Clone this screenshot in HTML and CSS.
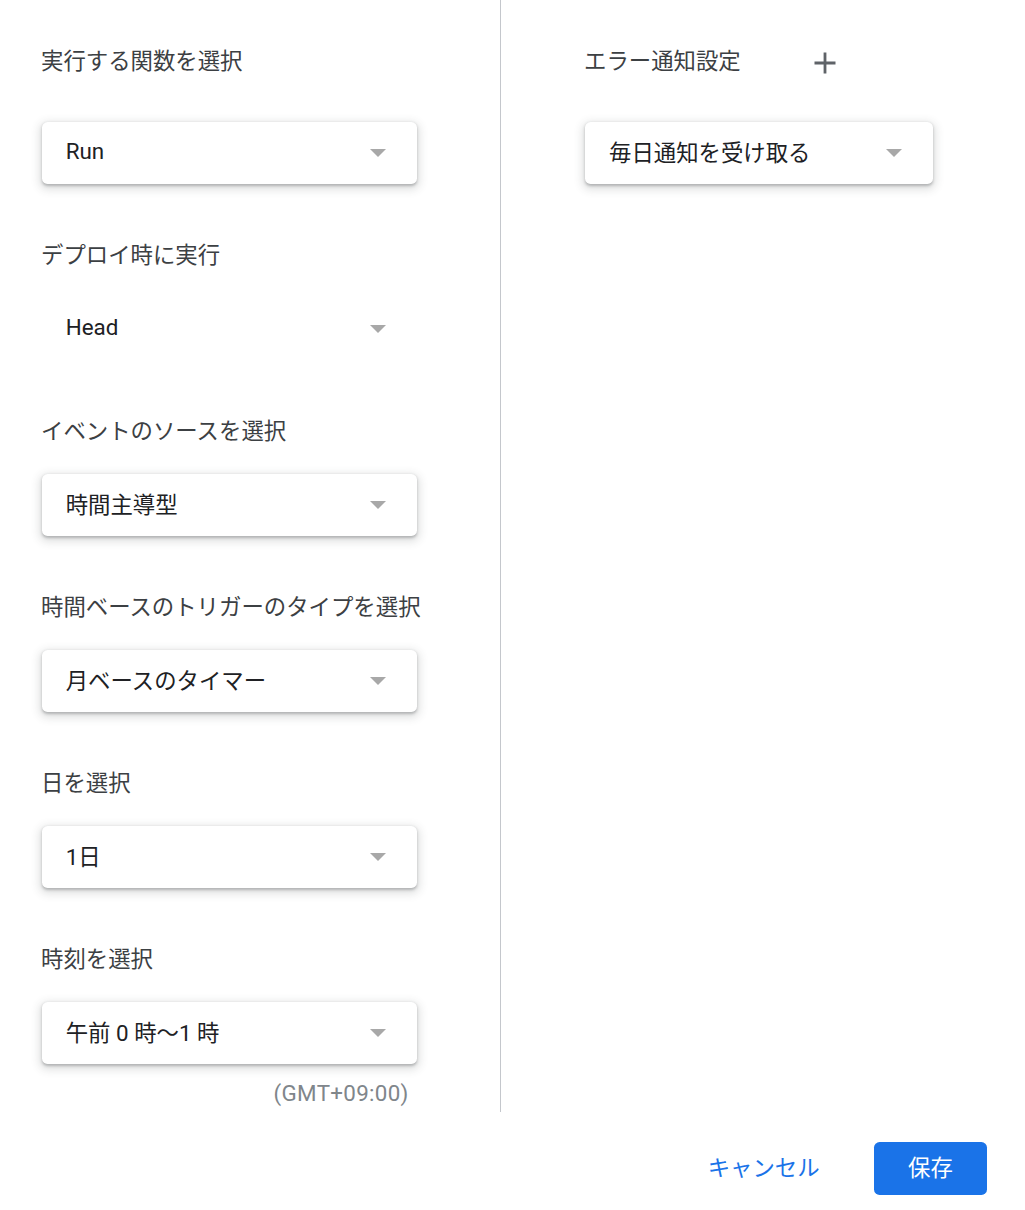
FILE: index.html
```html
<!DOCTYPE html>
<html lang="ja">
<head>
<meta charset="utf-8">
<title>トリガーを追加</title>
<link rel="stylesheet" href="styles.css">
</head>
<body>
<div class="dialog">
  <div class="main">
    <div class="col col-left">
      <div class="field first">
        <div class="label">実行する関数を選択</div>
        <div class="select boxed"><span class="value">Run</span><span class="arrow"></span></div>
      </div>
      <div class="field">
        <div class="label">デプロイ時に実行</div>
        <div class="select"><span class="value">Head</span><span class="arrow"></span></div>
      </div>
      <div class="field">
        <div class="label">イベントのソースを選択</div>
        <div class="select boxed"><span class="value">時間主導型</span><span class="arrow"></span></div>
      </div>
      <div class="field">
        <div class="label">時間ベースのトリガーのタイプを選択</div>
        <div class="select boxed"><span class="value">月ベースのタイマー</span><span class="arrow"></span></div>
      </div>
      <div class="field">
        <div class="label">日を選択</div>
        <div class="select boxed"><span class="value">1日</span><span class="arrow"></span></div>
      </div>
      <div class="field">
        <div class="label">時刻を選択</div>
        <div class="select boxed"><span class="value">午前 0 時〜1 時</span><span class="arrow"></span></div>
        <div class="tz">(GMT+09:00)</div>
      </div>
    </div>
    <div class="col col-right">
      <div class="field first">
        <div class="label label-row">エラー通知設定<span class="plus"><svg width="22" height="22" viewBox="0 0 22 22"><path d="M11 0.5V21.5M0.5 11H21.5" stroke="#5f6368" stroke-width="2.8" fill="none"/></svg></span></div>
        <div class="select boxed narrow"><span class="value">毎日通知を受け取る</span><span class="arrow"></span></div>
      </div>
    </div>
  </div>
  <div class="footer">
    <button class="btn btn-text">キャンセル</button>
    <button class="btn btn-primary">保存</button>
  </div>
</div>
</body>
</html>
```

FILE: styles.css
```css
html, body {
  margin: 0;
  padding: 0;
  background: #ffffff;
}
body {
  font-family: Roboto, "Noto Sans CJK JP", sans-serif;
  color: #202124;
  font-size: 22.4px;
}
.dialog {
  width: 1025px;
}
.main {
  display: flex;
  height: 1112px;
}
.col {
  box-sizing: border-box;
  padding-top: 45px;
}
.col-left {
  width: 501px;
  padding-left: 41.7px;
  padding-right: 83px;
  border-right: 1px solid #c4c7cc;
}
.col-right {
  flex: 1;
  padding-left: 83px;
}
.field {
  display: flex;
  flex-direction: column;
  margin-top: 55.4px;
}
.field.first {
  margin-top: 0;
}
.label {
  height: 32px;
  line-height: 32px;
  font-size: 22.4px;
  color: #3c4043;
  margin-bottom: 27px;
  margin-left: -0.7px;
  white-space: nowrap;
}
.col-right .label {
  margin-left: 0;
}
.field.first .label {
  margin-bottom: 45px;
}
.label-row {
  display: flex;
  align-items: center;
}
.plus {
  display: inline-flex;
  width: 22px;
  height: 22px;
  margin-left: 73px;
  margin-top: 3px;
}
.select {
  box-sizing: border-box;
  width: 375px;
  height: 61.6px;
  display: flex;
  align-items: center;
  justify-content: space-between;
  padding-left: 24px;
  padding-right: 30.5px;
  border-radius: 5.6px;
  background: #ffffff;
}
.select.boxed {
  box-shadow: 0 1.4px 2.8px rgba(60, 64, 67, 0.3), 0 2.8px 8.4px 2.8px rgba(60, 64, 67, 0.15);
}
.select.narrow {
  width: 347.5px;
  margin-left: 1px;
}
.value {
  font-size: 22.4px;
  color: #202124;
  white-space: nowrap;
  margin-bottom: 4px;
}
.arrow {
  width: 0;
  height: 0;
  border-left: 8.4px solid transparent;
  border-right: 8.4px solid transparent;
  border-top: 8.4px solid #a8a8a8;
}
.tz {
  margin-top: 16px;
  width: 367px;
  text-align: right;
  line-height: 26px;
  color: #80868b;
  font-size: 22.4px;
  letter-spacing: 0.3px;
}
.footer {
  display: flex;
  justify-content: flex-end;
  align-items: center;
  padding-top: 30px;
  padding-right: 38px;
}
.btn {
  font-family: Roboto, "Noto Sans CJK JP", sans-serif;
  font-size: 22.4px;
  border: none;
  background: none;
  cursor: pointer;
  height: 53.2px;
  border-radius: 5.6px;
  padding: 0 0 5px 0;
}
.btn-text {
  color: #1a73e8;
  padding: 0 22.4px 5px;
  margin-right: 32px;
}
.btn-primary {
  width: 113px;
  background: #1a73e8;
  color: #ffffff;
}
```
